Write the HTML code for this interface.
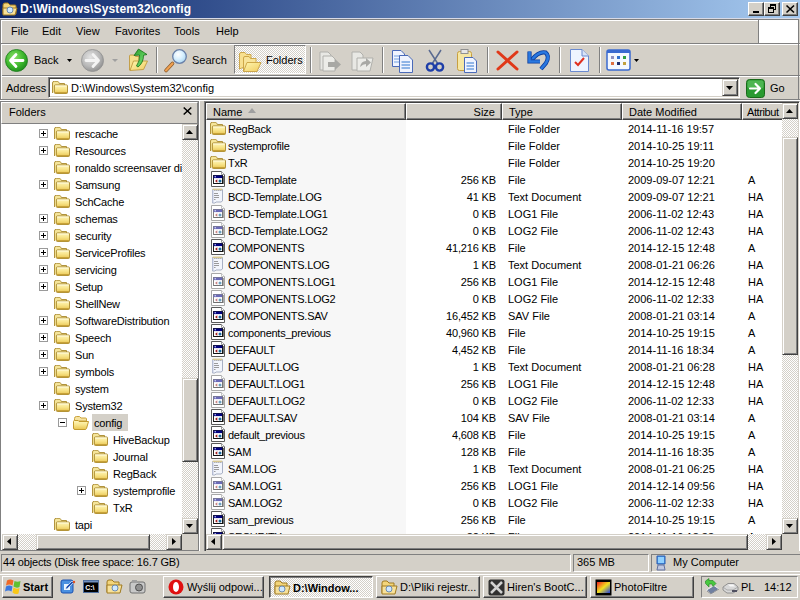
<!DOCTYPE html><html><head><meta charset="utf-8"><title>D:\Windows\System32\config</title><style>
*{box-sizing:border-box}
html,body{margin:0;padding:0}
body{width:800px;height:600px;overflow:hidden;position:relative;background:#d4d0c8;font-family:"Liberation Sans",sans-serif;font-size:11px;color:#000}
.abs{position:absolute}
.t{position:absolute;white-space:nowrap;line-height:13px;height:13px}
.raised{background:#d4d0c8;border-top:1px solid #fff;border-left:1px solid #fff;border-right:1px solid #404040;border-bottom:1px solid #404040;box-shadow:inset -1px -1px 0 #808080}
.raised2{background:#d4d0c8;border-top:1px solid #d4d0c8;border-left:1px solid #d4d0c8;border-right:1px solid #404040;border-bottom:1px solid #404040;box-shadow:inset 1px 1px 0 #fff, inset -1px -1px 0 #808080}
.sunk{border-top:1px solid #808080;border-left:1px solid #808080;border-right:1px solid #fff;border-bottom:1px solid #fff;box-shadow:inset 1px 1px 0 #404040, inset -1px -1px 0 #d4d0c8}
.thin{border-top:1px solid #808080;border-left:1px solid #808080;border-right:1px solid #fff;border-bottom:1px solid #fff}
.dither{background-color:#fff;background-image:linear-gradient(45deg,#d4d0c8 25%,transparent 25%,transparent 75%,#d4d0c8 75%),linear-gradient(45deg,#d4d0c8 25%,transparent 25%,transparent 75%,#d4d0c8 75%);background-size:2px 2px;background-position:0 0,1px 1px}
.hl{position:absolute;height:1px}
.vl{position:absolute;width:1px}
svg{position:absolute;overflow:visible}
</style></head><body>
<svg width="0" height="0" style="position:absolute">
<defs>
<linearGradient id="fy" x1="0" y1="0" x2="0" y2="1"><stop offset="0" stop-color="#fff8c0"/><stop offset="0.5" stop-color="#f8e48a"/><stop offset="1" stop-color="#e8c450"/></linearGradient>
<radialGradient id="gback" cx="0.4" cy="0.35" r="0.7"><stop offset="0" stop-color="#8ee06a"/><stop offset="0.6" stop-color="#3cb72c"/><stop offset="1" stop-color="#1c8a1c"/></radialGradient>
<radialGradient id="gfwd" cx="0.4" cy="0.35" r="0.7"><stop offset="0" stop-color="#e4e4e4"/><stop offset="0.6" stop-color="#b8b8b8"/><stop offset="1" stop-color="#8c8c8c"/></radialGradient>
<symbol id="fold" viewBox="0 0 16 13"><path d="M0.5 12 V2 Q0.5 0.3 2.3 0.3 H5.3 Q6.2 0.3 6.7 1.2 L7.3 2.5 H12.5 V5" fill="#f5e59a" stroke="#a8882c" stroke-width="0.9"/><rect x="2.4" y="3.9" width="13.1" height="8.6" rx="1" fill="url(#fy)" stroke="#a8882c" stroke-width="0.9"/><path d="M3 11.6 H15" stroke="#c8a238" stroke-width="1.2"/><path d="M3.2 5 H14.6" stroke="#fffce8" stroke-width="0.8"/></symbol>
<symbol id="fopen" viewBox="0 0 16 14"><path d="M1.5 2.5 Q1.5 0.5 3.5 0.5 H6.5 L8 2 H12.5 Q13.5 2 13.5 3 V5 H1.5Z" fill="#f6e3a0" stroke="#c9a23c"/><path d="M0.5 5.5 Q0.5 4.5 1.5 4.5 H5 L6 5.5 H15.5 L13.5 12.5 Q13 13.5 12 13.5 H2 Q0.5 13.5 0.5 12Z" fill="url(#fy)" stroke="#c29a2e"/></symbol>
<symbol id="reg" viewBox="0 0 16 16"><path d="M1.5 0.5 H11.5 L14.5 3.5 V15.5 H1.5Z" fill="#fff" stroke="#5a5a5a"/><path d="M11.5 0.5 V3.5 H14.5" fill="#fff" stroke="#9a9a9a"/><rect x="3.5" y="4.5" width="9" height="8" fill="#fff" stroke="#202020"/><rect x="3.5" y="4.5" width="9" height="2.6" fill="#000080"/><circle cx="5.2" cy="5.8" r="0.7" fill="#d8d8ff"/><path d="M7.3 8.3 L5 10 L7.3 11.7Z" fill="#a01818"/><circle cx="10" cy="10" r="1.5" fill="#1a6aa0"/><path d="M4 12.5 H13 V5" fill="none" stroke="#101010" stroke-width="1.2"/></symbol>
<symbol id="regl" viewBox="0 0 16 16"><path d="M1.5 0.5 H11.5 L14.5 3.5 V15.5 H1.5Z" fill="#fff" stroke="#a8a8a8"/><path d="M11.5 0.5 V3.5 H14.5" fill="#fff" stroke="#c0c0c0"/><rect x="3.5" y="4.5" width="9" height="8" fill="#fff" stroke="#808080"/><rect x="3.5" y="4.5" width="9" height="2.6" fill="#6a6ab8"/><circle cx="5.2" cy="5.8" r="0.7" fill="#e8e8ff"/><path d="M7.3 8.3 L5 10 L7.3 11.7Z" fill="#c88080"/><circle cx="10" cy="10" r="1.5" fill="#6aa0c0"/><path d="M4 12.5 H13 V5" fill="none" stroke="#707070" stroke-width="1.2"/></symbol>
<symbol id="txt" viewBox="0 0 16 16"><path d="M2.5 1.5 H12.5 V13 L11 14 H6 L5 15 H2.5Z" fill="#f2f5fc" stroke="#a8b0c4"/><path d="M2.8 1.3 H12.2" stroke="#d8c890" stroke-width="1.4"/><path d="M4.5 2.5 h0.8 M6.5 2.5 h0.8 M8.5 2.5 h0.8 M10.5 2.5 h0.8" stroke="#707070"/><path d="M4 5.5 H8 M4 7.5 H9 M4 9.5 H9 M4 11.5 H5.5" stroke="#909090" stroke-width="0.9"/><path d="M3 2 V14.5" stroke="#c0c8e0"/></symbol>
</defs></svg>
<div class="abs" style="left:0;top:0;width:800px;height:18px;background:linear-gradient(to right,#0a246a,#a6caf0)"></div>
<svg style="left:2px;top:1px" width="16" height="16" viewBox="0 0 16 16"><path d="M1 4 Q1 2 3 2 H6 L8 4 H13 Q14 4 14 5 V13 H1Z" fill="#f3d57a" stroke="#a07a20"/><path d="M1 7 H15 L13 14 H1Z" fill="#f7e19a" stroke="#a07a20"/><circle cx="8" cy="9" r="3" fill="#cfe8ff" stroke="#6a8ab0"/></svg>
<div class="t" style="left:20px;top:2px;color:#fff;font-weight:bold;font-size:12px;line-height:14px;height:14px;letter-spacing:0.15px">D:\Windows\System32\config</div>
<div class="abs raised" style="left:748px;top:2px;width:16px;height:14px"><div class="abs" style="left:4px;top:8px;width:6px;height:2px;background:#000"></div></div>
<div class="abs raised" style="left:764px;top:2px;width:16px;height:14px"><div class="abs" style="left:5px;top:1px;width:6px;height:6px;border:1px solid #000;border-top-width:2px"></div><div class="abs" style="left:3px;top:4px;width:6px;height:6px;border:1px solid #000;border-top-width:2px;background:#d4d0c8"></div></div>
<div class="abs raised" style="left:782px;top:2px;width:16px;height:14px"><svg style="left:3px;top:2px" width="9" height="8" viewBox="0 0 9 8"><path d="M0.5 0.5 L8 7.5 M8 0.5 L0.5 7.5" stroke="#000" stroke-width="1.6"/></svg></div>
<div class="hl" style="left:0;top:18px;width:800px;background:#d8dae6"></div>
<div class="hl" style="left:0;top:19px;width:799px;background:#808080"></div>
<div class="hl" style="left:1px;top:20px;width:757px;background:#fff"></div>
<div class="vl" style="left:0;top:19px;height:26px;background:#808080"></div>
<div class="vl" style="left:1px;top:20px;height:24px;background:#fff"></div>
<div class="hl" style="left:0;top:43px;width:800px;background:#808080"></div>
<div class="hl" style="left:1px;top:44px;width:799px;background:#fff"></div>
<div class="abs" style="left:759px;top:20px;width:39px;height:23px;background:#fff"></div>
<div class="vl" style="left:758px;top:19px;height:24px;background:#808080"></div>
<div class="t" style="left:11px;top:25px">File</div>
<div class="t" style="left:42px;top:25px">Edit</div>
<div class="t" style="left:76px;top:25px">View</div>
<div class="t" style="left:115px;top:25px">Favorites</div>
<div class="t" style="left:174px;top:25px">Tools</div>
<div class="t" style="left:216px;top:25px">Help</div>
<div class="hl" style="left:0;top:75px;width:800px;background:#808080"></div>
<div class="hl" style="left:1px;top:76px;width:799px;background:#fff"></div>
<div class="vl" style="left:0;top:43px;height:34px;background:#808080"></div>
<div class="vl" style="left:1px;top:44px;height:32px;background:#fff"></div>
<svg style="left:5px;top:49px" width="23" height="23" viewBox="0 0 23 23"><circle cx="11.5" cy="11.5" r="11" fill="url(#gback)" stroke="#1a7a1a" stroke-width="0.8"/><path d="M11 5.5 L5.5 11.5 L11 17.5 M6 11.5 H18" fill="none" stroke="#fff" stroke-width="2.8" stroke-linecap="round" stroke-linejoin="round"/></svg>
<div class="t" style="left:34px;top:54px">Back</div>
<svg style="left:67px;top:59px" width="5" height="3" viewBox="0 0 5 3"><path d="M0 0H5L2.5 3Z" fill="#000"/></svg>
<svg style="left:81px;top:49px" width="23" height="23" viewBox="0 0 23 23"><circle cx="11.5" cy="11.5" r="11" fill="url(#gfwd)" stroke="#909090" stroke-width="0.8"/><path d="M12 5.5 L17.5 11.5 L12 17.5 M17 11.5 H5" fill="none" stroke="#f4f4f4" stroke-width="2.8" stroke-linecap="round" stroke-linejoin="round"/></svg>
<svg style="left:112px;top:59px" width="6" height="3" viewBox="0 0 6 3"><path d="M0 0H6L3 3Z" fill="#a0a0a0"/></svg>
<svg style="left:124px;top:46px" width="28" height="28" viewBox="0 0 28 28"><defs><linearGradient id="gup" x1="0" y1="0" x2="1" y2="1"><stop offset="0" stop-color="#fff6b0"/><stop offset="1" stop-color="#f0cc60"/></linearGradient><linearGradient id="garr" x1="0" y1="0" x2="1" y2="1"><stop offset="0" stop-color="#2a9a2a"/><stop offset="0.6" stop-color="#60d060"/><stop offset="1" stop-color="#1a801a"/></linearGradient></defs><path d="M5.5 24 V10 Q5.5 9 6.5 9 H10 L11.5 10.5 H15 V20Z" fill="#f6e08c" stroke="#c09a40" stroke-width="0.9"/><path d="M6 24.5 L9.5 15 H23.5 L19.5 23.5 Z" fill="url(#gup)" stroke="#c09a40" stroke-width="0.9"/><path d="M10 9.5 L14.5 3 L23 8.5 L19.5 9.2 Q19.5 17 14 21 L12.5 20 Q16 15 15.5 9Z" fill="url(#garr)" stroke="#157015" stroke-width="0.8" stroke-linejoin="round"/></svg>
<div class="vl" style="left:156px;top:47px;height:26px;background:#808080"></div><div class="vl" style="left:157px;top:47px;height:26px;background:#fff"></div>
<svg style="left:163px;top:49px" width="25" height="24" viewBox="0 0 25 24"><path d="M3 21.5 L9.5 14.5" stroke="#8a5a2a" stroke-width="3.6" stroke-linecap="round"/><path d="M3 21.5 L9.5 14.5" stroke="#f0a050" stroke-width="2.2" stroke-linecap="round"/><radialGradient id="gsr" cx="0.4" cy="0.35" r="0.7"><stop offset="0" stop-color="#ffffff"/><stop offset="0.5" stop-color="#d8f0ff"/><stop offset="1" stop-color="#a8d4f0"/></radialGradient><circle cx="16.5" cy="7.5" r="6.8" fill="url(#gsr)" stroke="#6a80a8" stroke-width="1.3"/></svg>
<div class="t" style="left:192px;top:54px">Search</div>
<div class="abs dither" style="left:234px;top:45px;width:72px;height:29px;border-top:1px solid #808080;border-left:1px solid #808080;border-right:1px solid #fff;border-bottom:1px solid #fff"></div>
<svg style="left:237px;top:50px" width="25" height="24" viewBox="0 0 25 24"><path d="M2.5 19 V4 Q2.5 2.5 4 2.5 H8 L9.5 4.5 H14 V14Z" fill="#f8e090" stroke="#c8a040" stroke-width="0.9"/><path d="M6.5 21 V8 Q6.5 6.5 8 6.5 H12 L13.5 8.5 H19 V18Z" fill="#f8e49a" stroke="#c8a040" stroke-width="0.9"/><path d="M6.5 21.5 L10 12.5 H24 L20 21.5Z" fill="url(#gup)" stroke="#c8a040" stroke-width="0.9"/></svg>
<div class="t" style="left:266px;top:54px">Folders</div>
<div class="vl" style="left:310px;top:47px;height:26px;background:#808080"></div><div class="vl" style="left:311px;top:47px;height:26px;background:#fff"></div>
<svg style="left:319px;top:50px" width="23" height="22" viewBox="0 0 23 22"><path d="M1 2 H9 L12 5 V20 H1Z" fill="#e8e8e4" stroke="#b0b0ac"/><path d="M4 6 H13 L16 9 V21 H4Z" fill="#ecece8" stroke="#b0b0ac"/><path d="M9 12 H16 V9 L22 14.5 L16 20 V17 H9Z" fill="#a8a8a4"/></svg>
<svg style="left:351px;top:50px" width="23" height="22" viewBox="0 0 23 22"><path d="M1 2 H9 L12 5 V20 H1Z" fill="#e8e8e4" stroke="#b0b0ac"/><path d="M6 8 H22 L19 21 H6Z" fill="#ecece8" stroke="#b0b0ac"/><path d="M9 17 Q10 11 15 11 V8 L20 12.5 L15 17 V14 Q12 14 9 17Z" fill="#a8a8a4"/></svg>
<div class="vl" style="left:382px;top:47px;height:26px;background:#808080"></div><div class="vl" style="left:383px;top:47px;height:26px;background:#fff"></div>
<svg style="left:391px;top:49px" width="24" height="24" viewBox="0 0 24 24"><path d="M1.5 1.5 H10 L13.5 5 V17.5 H1.5Z" fill="#f0f4ff" stroke="#4a6ab8"/><path d="M3 7H11M3 10H11M3 13H11" stroke="#70a0e0"/><path d="M8.5 6.5 H17 L21.5 11 V23.5 H8.5Z" fill="#f0f4ff" stroke="#4a6ab8"/><path d="M10.5 13H19M10.5 16H19M10.5 19H19" stroke="#70a0e0" stroke-width="1.3"/></svg>
<svg style="left:426px;top:49px" width="18" height="23" viewBox="0 0 18 23"><path d="M3 1 L12 15 M15 1 L6 15" stroke="#5a6a90" stroke-width="1.5"/><circle cx="4.5" cy="18" r="3.6" fill="none" stroke="#1e3ea8" stroke-width="2.4"/><circle cx="13.5" cy="18" r="3.6" fill="none" stroke="#1e3ea8" stroke-width="2.4"/></svg>
<svg style="left:456px;top:48px" width="22" height="25" viewBox="0 0 22 25"><rect x="1.5" y="3.5" width="14" height="19" rx="2" fill="#f6e7a4" stroke="#c8a040"/><rect x="5" y="1.5" width="7" height="4" fill="#e8e8e8" stroke="#909090"/><path d="M8.5 9.5 H17 L20.5 13 V24.5 H8.5Z" fill="#f0f4ff" stroke="#4a6ab8"/><path d="M10.5 15H18M10.5 18H18M10.5 21H18" stroke="#70a0e0" stroke-width="1.3"/></svg>
<div class="vl" style="left:487px;top:47px;height:26px;background:#808080"></div><div class="vl" style="left:488px;top:47px;height:26px;background:#fff"></div>
<svg style="left:496px;top:50px" width="23" height="21" viewBox="0 0 23 21"><path d="M2 2 L21 19 M21 2 L2 19" stroke="#e03818" stroke-width="3" stroke-linecap="round"/></svg>
<svg style="left:527px;top:49px" width="24" height="24" viewBox="0 0 24 24"><path d="M5 10.5 Q12 2 18.5 3.5 Q23 7 19 14 L14 20" fill="none" stroke="#0a3a9a" stroke-width="4.2"/><path d="M5 10.5 Q12 2 18.5 3.5 Q23 7 19 14 L14 20" fill="none" stroke="#2a78e0" stroke-width="2.6"/><path d="M2.5 2.5 V12.5 H13" fill="none" stroke="#0a3a9a" stroke-width="4.2"/><path d="M2.5 2.5 V12.5 H13" fill="none" stroke="#2a78e0" stroke-width="2.6"/></svg>
<div class="vl" style="left:559px;top:47px;height:26px;background:#808080"></div><div class="vl" style="left:560px;top:47px;height:26px;background:#fff"></div>
<svg style="left:569px;top:48px" width="21" height="25" viewBox="0 0 21 25"><path d="M1.5 1.5 H13 L19.5 8 V23.5 H1.5Z" fill="#eef4ff" stroke="#6a8ad0"/><path d="M13 1.5 V8 H19.5" fill="#d8e4f8" stroke="#6a8ad0"/><path d="M6 14 L9 17 L15 10" fill="none" stroke="#e03020" stroke-width="2"/></svg>
<div class="vl" style="left:599px;top:47px;height:26px;background:#808080"></div><div class="vl" style="left:600px;top:47px;height:26px;background:#fff"></div>
<svg style="left:606px;top:49px" width="25" height="22" viewBox="0 0 25 22"><rect x="1" y="1" width="23" height="20" rx="2" fill="#f4f8ff" stroke="#3a6ad0" stroke-width="1.5"/><rect x="1" y="1" width="23" height="3" fill="#3a6ad0"/><rect x="5" y="7" width="3" height="3" fill="#9090c0"/><rect x="11" y="7" width="3" height="3" fill="#3070d0"/><rect x="17" y="7" width="3" height="3" fill="#30a040"/><rect x="5" y="13" width="3" height="3" fill="#e07040"/><rect x="11" y="13" width="3" height="3" fill="#203070"/><rect x="17" y="13" width="3" height="3" fill="#c0a040"/></svg>
<svg style="left:634px;top:59px" width="5" height="3" viewBox="0 0 5 3"><path d="M0 0H5L2.5 3Z" fill="#000"/></svg>
<div class="hl" style="left:0;top:99px;width:800px;background:#808080"></div>
<div class="vl" style="left:0;top:76px;height:24px;background:#808080"></div>
<div class="vl" style="left:1px;top:77px;height:22px;background:#fff"></div>
<div class="t" style="left:6px;top:82px">Address</div>
<div class="abs sunk" style="left:48px;top:77px;width:692px;height:21px;background:#fff"></div>
<svg style="left:52px;top:81px" width="16" height="13"><use href="#fold" width="16" height="13"/></svg>
<div class="t" style="left:71px;top:82px">D:\Windows\System32\config</div>
<div class="abs raised2" style="left:722px;top:79px;width:16px;height:17px"></div>
<svg style="left:726px;top:86px" width="7" height="4" viewBox="0 0 7 4"><path d="M0 0H7L3.5 4Z" fill="#000"/></svg>
<svg style="left:746px;top:79px" width="19" height="19" viewBox="0 0 19 19"><rect x="0.5" y="0.5" width="18" height="18" rx="3" fill="#2a9a30" stroke="#1a6a1a"/><rect x="1.5" y="1.5" width="16" height="8" rx="2" fill="#5cc060" opacity="0.7"/><path d="M4 9.5 H14 M9.5 5 L14 9.5 L9.5 14" fill="none" stroke="#fff" stroke-width="2.2" stroke-linecap="round" stroke-linejoin="round"/></svg>
<div class="t" style="left:770px;top:82px">Go</div>
<div class="vl" style="left:798px;top:19px;height:81px;background:#808080"></div>
<div class="hl" style="left:0;top:100px;width:800px;background:#fff"></div>
<div class="hl" style="left:0;top:101px;width:199px;background:#808080"></div>
<div class="vl" style="left:0;top:101px;height:450px;background:#808080"></div>
<div class="vl" style="left:198px;top:101px;height:450px;background:#808080"></div>
<div class="vl" style="left:199px;top:101px;height:451px;background:#fff"></div>
<div class="hl" style="left:0;top:550px;width:199px;background:#808080"></div>
<div class="hl" style="left:0;top:551px;width:800px;background:#fff"></div>
<div class="abs" style="left:1px;top:102px;width:197px;height:22px;background:#d4d0c8;border-top:1px solid #fff;border-left:1px solid #fff;border-bottom:1px solid #808080;border-right:1px solid #808080"></div>
<div class="t" style="left:9px;top:106px">Folders</div>
<svg style="left:183px;top:107px" width="9" height="8" viewBox="0 0 9 8"><path d="M0.7 0.5 L8.3 7.5 M8.3 0.5 L0.7 7.5" stroke="#000" stroke-width="1.5"/></svg>
<div class="abs" style="left:1px;top:124px;width:197px;height:426px;background:#fff;overflow:hidden">
<div class="abs" style="left:38px;top:5px;width:9px;height:9px;border:1px solid #9a9a9a;background:#fff"><div class="abs" style="left:1px;top:3px;width:5px;height:1px;background:#000"></div><div class="abs" style="left:3px;top:1px;width:1px;height:5px;background:#000"></div></div>
<svg style="left:53px;top:3px" width="16" height="13"><use href="#fold" width="16" height="13"/></svg>
<div class="t" style="left:74px;top:4px;letter-spacing:-0.2px">rescache</div>
<div class="abs" style="left:38px;top:22px;width:9px;height:9px;border:1px solid #9a9a9a;background:#fff"><div class="abs" style="left:1px;top:3px;width:5px;height:1px;background:#000"></div><div class="abs" style="left:3px;top:1px;width:1px;height:5px;background:#000"></div></div>
<svg style="left:53px;top:20px" width="16" height="13"><use href="#fold" width="16" height="13"/></svg>
<div class="t" style="left:74px;top:21px;letter-spacing:-0.2px">Resources</div>
<svg style="left:53px;top:37px" width="16" height="13"><use href="#fold" width="16" height="13"/></svg>
<div class="t" style="left:74px;top:38px;letter-spacing:-0.2px">ronaldo screensaver di</div>
<div class="abs" style="left:38px;top:56px;width:9px;height:9px;border:1px solid #9a9a9a;background:#fff"><div class="abs" style="left:1px;top:3px;width:5px;height:1px;background:#000"></div><div class="abs" style="left:3px;top:1px;width:1px;height:5px;background:#000"></div></div>
<svg style="left:53px;top:54px" width="16" height="13"><use href="#fold" width="16" height="13"/></svg>
<div class="t" style="left:74px;top:55px;letter-spacing:-0.2px">Samsung</div>
<svg style="left:53px;top:71px" width="16" height="13"><use href="#fold" width="16" height="13"/></svg>
<div class="t" style="left:74px;top:72px;letter-spacing:-0.2px">SchCache</div>
<div class="abs" style="left:38px;top:90px;width:9px;height:9px;border:1px solid #9a9a9a;background:#fff"><div class="abs" style="left:1px;top:3px;width:5px;height:1px;background:#000"></div><div class="abs" style="left:3px;top:1px;width:1px;height:5px;background:#000"></div></div>
<svg style="left:53px;top:88px" width="16" height="13"><use href="#fold" width="16" height="13"/></svg>
<div class="t" style="left:74px;top:89px;letter-spacing:-0.2px">schemas</div>
<div class="abs" style="left:38px;top:107px;width:9px;height:9px;border:1px solid #9a9a9a;background:#fff"><div class="abs" style="left:1px;top:3px;width:5px;height:1px;background:#000"></div><div class="abs" style="left:3px;top:1px;width:1px;height:5px;background:#000"></div></div>
<svg style="left:53px;top:105px" width="16" height="13"><use href="#fold" width="16" height="13"/></svg>
<div class="t" style="left:74px;top:106px;letter-spacing:-0.2px">security</div>
<div class="abs" style="left:38px;top:124px;width:9px;height:9px;border:1px solid #9a9a9a;background:#fff"><div class="abs" style="left:1px;top:3px;width:5px;height:1px;background:#000"></div><div class="abs" style="left:3px;top:1px;width:1px;height:5px;background:#000"></div></div>
<svg style="left:53px;top:122px" width="16" height="13"><use href="#fold" width="16" height="13"/></svg>
<div class="t" style="left:74px;top:123px;letter-spacing:-0.2px">ServiceProfiles</div>
<div class="abs" style="left:38px;top:141px;width:9px;height:9px;border:1px solid #9a9a9a;background:#fff"><div class="abs" style="left:1px;top:3px;width:5px;height:1px;background:#000"></div><div class="abs" style="left:3px;top:1px;width:1px;height:5px;background:#000"></div></div>
<svg style="left:53px;top:139px" width="16" height="13"><use href="#fold" width="16" height="13"/></svg>
<div class="t" style="left:74px;top:140px;letter-spacing:-0.2px">servicing</div>
<div class="abs" style="left:38px;top:158px;width:9px;height:9px;border:1px solid #9a9a9a;background:#fff"><div class="abs" style="left:1px;top:3px;width:5px;height:1px;background:#000"></div><div class="abs" style="left:3px;top:1px;width:1px;height:5px;background:#000"></div></div>
<svg style="left:53px;top:156px" width="16" height="13"><use href="#fold" width="16" height="13"/></svg>
<div class="t" style="left:74px;top:157px;letter-spacing:-0.2px">Setup</div>
<svg style="left:53px;top:173px" width="16" height="13"><use href="#fold" width="16" height="13"/></svg>
<div class="t" style="left:74px;top:174px;letter-spacing:-0.2px">ShellNew</div>
<div class="abs" style="left:38px;top:192px;width:9px;height:9px;border:1px solid #9a9a9a;background:#fff"><div class="abs" style="left:1px;top:3px;width:5px;height:1px;background:#000"></div><div class="abs" style="left:3px;top:1px;width:1px;height:5px;background:#000"></div></div>
<svg style="left:53px;top:190px" width="16" height="13"><use href="#fold" width="16" height="13"/></svg>
<div class="t" style="left:74px;top:191px;letter-spacing:-0.2px">SoftwareDistribution</div>
<div class="abs" style="left:38px;top:209px;width:9px;height:9px;border:1px solid #9a9a9a;background:#fff"><div class="abs" style="left:1px;top:3px;width:5px;height:1px;background:#000"></div><div class="abs" style="left:3px;top:1px;width:1px;height:5px;background:#000"></div></div>
<svg style="left:53px;top:207px" width="16" height="13"><use href="#fold" width="16" height="13"/></svg>
<div class="t" style="left:74px;top:208px;letter-spacing:-0.2px">Speech</div>
<div class="abs" style="left:38px;top:226px;width:9px;height:9px;border:1px solid #9a9a9a;background:#fff"><div class="abs" style="left:1px;top:3px;width:5px;height:1px;background:#000"></div><div class="abs" style="left:3px;top:1px;width:1px;height:5px;background:#000"></div></div>
<svg style="left:53px;top:224px" width="16" height="13"><use href="#fold" width="16" height="13"/></svg>
<div class="t" style="left:74px;top:225px;letter-spacing:-0.2px">Sun</div>
<div class="abs" style="left:38px;top:243px;width:9px;height:9px;border:1px solid #9a9a9a;background:#fff"><div class="abs" style="left:1px;top:3px;width:5px;height:1px;background:#000"></div><div class="abs" style="left:3px;top:1px;width:1px;height:5px;background:#000"></div></div>
<svg style="left:53px;top:241px" width="16" height="13"><use href="#fold" width="16" height="13"/></svg>
<div class="t" style="left:74px;top:242px;letter-spacing:-0.2px">symbols</div>
<svg style="left:53px;top:258px" width="16" height="13"><use href="#fold" width="16" height="13"/></svg>
<div class="t" style="left:74px;top:259px;letter-spacing:-0.2px">system</div>
<div class="abs" style="left:38px;top:277px;width:9px;height:9px;border:1px solid #9a9a9a;background:#fff"><div class="abs" style="left:1px;top:3px;width:5px;height:1px;background:#000"></div><div class="abs" style="left:3px;top:1px;width:1px;height:5px;background:#000"></div></div>
<svg style="left:53px;top:275px" width="16" height="13"><use href="#fold" width="16" height="13"/></svg>
<div class="t" style="left:74px;top:276px;letter-spacing:-0.2px">System32</div>
<div class="abs" style="left:57px;top:294px;width:9px;height:9px;border:1px solid #9a9a9a;background:#fff"><div class="abs" style="left:1px;top:3px;width:5px;height:1px;background:#000"></div></div>
<div class="abs" style="left:91px;top:290px;width:36px;height:17px;background:#d4d0c8"></div>
<svg style="left:72px;top:292px" width="16" height="14"><use href="#fopen" width="16" height="14"/></svg>
<div class="t" style="left:93px;top:293px;letter-spacing:-0.2px">config</div>
<svg style="left:91px;top:309px" width="16" height="13"><use href="#fold" width="16" height="13"/></svg>
<div class="t" style="left:112px;top:310px;letter-spacing:-0.2px">HiveBackup</div>
<svg style="left:91px;top:326px" width="16" height="13"><use href="#fold" width="16" height="13"/></svg>
<div class="t" style="left:112px;top:327px;letter-spacing:-0.2px">Journal</div>
<svg style="left:91px;top:343px" width="16" height="13"><use href="#fold" width="16" height="13"/></svg>
<div class="t" style="left:112px;top:344px;letter-spacing:-0.2px">RegBack</div>
<div class="abs" style="left:76px;top:362px;width:9px;height:9px;border:1px solid #9a9a9a;background:#fff"><div class="abs" style="left:1px;top:3px;width:5px;height:1px;background:#000"></div><div class="abs" style="left:3px;top:1px;width:1px;height:5px;background:#000"></div></div>
<svg style="left:91px;top:360px" width="16" height="13"><use href="#fold" width="16" height="13"/></svg>
<div class="t" style="left:112px;top:361px;letter-spacing:-0.2px">systemprofile</div>
<svg style="left:91px;top:377px" width="16" height="13"><use href="#fold" width="16" height="13"/></svg>
<div class="t" style="left:112px;top:378px;letter-spacing:-0.2px">TxR</div>
<svg style="left:53px;top:394px" width="16" height="13"><use href="#fold" width="16" height="13"/></svg>
<div class="t" style="left:74px;top:395px;letter-spacing:-0.2px">tapi</div>
</div>
<div class="abs dither" style="left:182px;top:124px;width:16px;height:410px"></div>
<div class="abs raised2" style="left:182px;top:124px;width:16px;height:16px"></div>
<svg style="left:186px;top:130px" width="7" height="4" viewBox="0 0 7 4"><path d="M3.5 0L7 4H0Z" fill="#000"/></svg>
<div class="abs raised2" style="left:182px;top:378px;width:16px;height:84px"></div>
<div class="abs raised2" style="left:182px;top:518px;width:16px;height:16px"></div>
<svg style="left:186px;top:524px" width="7" height="4" viewBox="0 0 7 4"><path d="M0 0H7L3.5 4Z" fill="#000"/></svg>
<div class="abs dither" style="left:2px;top:534px;width:180px;height:16px"></div>
<div class="abs raised2" style="left:2px;top:534px;width:16px;height:16px"></div>
<svg style="left:7px;top:538px" width="4" height="7" viewBox="0 0 4 7"><path d="M4 0V7L0 3.5Z" fill="#000"/></svg>
<div class="abs raised2" style="left:36px;top:534px;width:114px;height:16px"></div>
<div class="abs raised2" style="left:166px;top:534px;width:16px;height:16px"></div>
<svg style="left:172px;top:538px" width="4" height="7" viewBox="0 0 4 7"><path d="M0 0V7L4 3.5Z" fill="#000"/></svg>
<div class="abs" style="left:182px;top:534px;width:16px;height:16px;background:#d4d0c8"></div>
<div class="abs" style="left:204px;top:101px;width:596px;height:451px;border-top:1px solid #808080;border-left:1px solid #808080;border-right:1px solid #fff;border-bottom:1px solid #fff;box-shadow:inset 1px 1px 0 #404040"></div>
<div class="abs" style="left:206px;top:119px;width:576px;height:415px;background:#fff;overflow:hidden">
<div class="abs" style="left:0;top:0;width:200px;height:415px;background:#f7f7f7"></div>
<svg style="left:4px;top:3px" width="16" height="13"><use href="#fold" width="16" height="13"/></svg>
<div class="t" style="left:22px;top:4px;letter-spacing:-0.25px">RegBack</div>
<div class="t" style="left:302px;top:4px">File Folder</div>
<div class="t" style="left:422px;top:4px">2014-11-16 19:57</div>
<svg style="left:4px;top:20px" width="16" height="13"><use href="#fold" width="16" height="13"/></svg>
<div class="t" style="left:22px;top:21px;letter-spacing:-0.25px">systemprofile</div>
<div class="t" style="left:302px;top:21px">File Folder</div>
<div class="t" style="left:422px;top:21px">2014-10-25 19:11</div>
<svg style="left:4px;top:37px" width="16" height="13"><use href="#fold" width="16" height="13"/></svg>
<div class="t" style="left:22px;top:38px;letter-spacing:-0.25px">TxR</div>
<div class="t" style="left:302px;top:38px">File Folder</div>
<div class="t" style="left:422px;top:38px">2014-10-25 19:20</div>
<svg style="left:4px;top:52px" width="16" height="16"><use href="#reg" width="16" height="16"/></svg>
<div class="t" style="left:22px;top:55px;letter-spacing:-0.25px">BCD-Template</div>
<div class="t" style="left:200px;width:90px;text-align:right;top:55px;letter-spacing:-0.15px">256 KB</div>
<div class="t" style="left:302px;top:55px">File</div>
<div class="t" style="left:422px;top:55px">2009-09-07 12:21</div>
<div class="t" style="left:542px;top:55px">A</div>
<svg style="left:4px;top:69px" width="16" height="16"><use href="#txt" width="16" height="16"/></svg>
<div class="t" style="left:22px;top:72px;letter-spacing:-0.25px">BCD-Template.LOG</div>
<div class="t" style="left:200px;width:90px;text-align:right;top:72px;letter-spacing:-0.15px">41 KB</div>
<div class="t" style="left:302px;top:72px">Text Document</div>
<div class="t" style="left:422px;top:72px">2009-09-07 12:21</div>
<div class="t" style="left:542px;top:72px">HA</div>
<svg style="left:4px;top:86px" width="16" height="16"><use href="#regl" width="16" height="16"/></svg>
<div class="t" style="left:22px;top:89px;letter-spacing:-0.25px">BCD-Template.LOG1</div>
<div class="t" style="left:200px;width:90px;text-align:right;top:89px;letter-spacing:-0.15px">0 KB</div>
<div class="t" style="left:302px;top:89px">LOG1 File</div>
<div class="t" style="left:422px;top:89px">2006-11-02 12:43</div>
<div class="t" style="left:542px;top:89px">HA</div>
<svg style="left:4px;top:103px" width="16" height="16"><use href="#regl" width="16" height="16"/></svg>
<div class="t" style="left:22px;top:106px;letter-spacing:-0.25px">BCD-Template.LOG2</div>
<div class="t" style="left:200px;width:90px;text-align:right;top:106px;letter-spacing:-0.15px">0 KB</div>
<div class="t" style="left:302px;top:106px">LOG2 File</div>
<div class="t" style="left:422px;top:106px">2006-11-02 12:43</div>
<div class="t" style="left:542px;top:106px">HA</div>
<svg style="left:4px;top:120px" width="16" height="16"><use href="#reg" width="16" height="16"/></svg>
<div class="t" style="left:22px;top:123px;letter-spacing:-0.25px">COMPONENTS</div>
<div class="t" style="left:200px;width:90px;text-align:right;top:123px;letter-spacing:-0.15px">41,216 KB</div>
<div class="t" style="left:302px;top:123px">File</div>
<div class="t" style="left:422px;top:123px">2014-12-15 12:48</div>
<div class="t" style="left:542px;top:123px">A</div>
<svg style="left:4px;top:137px" width="16" height="16"><use href="#txt" width="16" height="16"/></svg>
<div class="t" style="left:22px;top:140px;letter-spacing:-0.25px">COMPONENTS.LOG</div>
<div class="t" style="left:200px;width:90px;text-align:right;top:140px;letter-spacing:-0.15px">1 KB</div>
<div class="t" style="left:302px;top:140px">Text Document</div>
<div class="t" style="left:422px;top:140px">2008-01-21 06:26</div>
<div class="t" style="left:542px;top:140px">HA</div>
<svg style="left:4px;top:154px" width="16" height="16"><use href="#regl" width="16" height="16"/></svg>
<div class="t" style="left:22px;top:157px;letter-spacing:-0.25px">COMPONENTS.LOG1</div>
<div class="t" style="left:200px;width:90px;text-align:right;top:157px;letter-spacing:-0.15px">256 KB</div>
<div class="t" style="left:302px;top:157px">LOG1 File</div>
<div class="t" style="left:422px;top:157px">2014-12-15 12:48</div>
<div class="t" style="left:542px;top:157px">HA</div>
<svg style="left:4px;top:171px" width="16" height="16"><use href="#regl" width="16" height="16"/></svg>
<div class="t" style="left:22px;top:174px;letter-spacing:-0.25px">COMPONENTS.LOG2</div>
<div class="t" style="left:200px;width:90px;text-align:right;top:174px;letter-spacing:-0.15px">0 KB</div>
<div class="t" style="left:302px;top:174px">LOG2 File</div>
<div class="t" style="left:422px;top:174px">2006-11-02 12:33</div>
<div class="t" style="left:542px;top:174px">HA</div>
<svg style="left:4px;top:188px" width="16" height="16"><use href="#reg" width="16" height="16"/></svg>
<div class="t" style="left:22px;top:191px;letter-spacing:-0.25px">COMPONENTS.SAV</div>
<div class="t" style="left:200px;width:90px;text-align:right;top:191px;letter-spacing:-0.15px">16,452 KB</div>
<div class="t" style="left:302px;top:191px">SAV File</div>
<div class="t" style="left:422px;top:191px">2008-01-21 03:14</div>
<div class="t" style="left:542px;top:191px">A</div>
<svg style="left:4px;top:205px" width="16" height="16"><use href="#reg" width="16" height="16"/></svg>
<div class="t" style="left:22px;top:208px;letter-spacing:-0.25px">components_previous</div>
<div class="t" style="left:200px;width:90px;text-align:right;top:208px;letter-spacing:-0.15px">40,960 KB</div>
<div class="t" style="left:302px;top:208px">File</div>
<div class="t" style="left:422px;top:208px">2014-10-25 19:15</div>
<div class="t" style="left:542px;top:208px">A</div>
<svg style="left:4px;top:222px" width="16" height="16"><use href="#reg" width="16" height="16"/></svg>
<div class="t" style="left:22px;top:225px;letter-spacing:-0.25px">DEFAULT</div>
<div class="t" style="left:200px;width:90px;text-align:right;top:225px;letter-spacing:-0.15px">4,452 KB</div>
<div class="t" style="left:302px;top:225px">File</div>
<div class="t" style="left:422px;top:225px">2014-11-16 18:34</div>
<div class="t" style="left:542px;top:225px">A</div>
<svg style="left:4px;top:239px" width="16" height="16"><use href="#txt" width="16" height="16"/></svg>
<div class="t" style="left:22px;top:242px;letter-spacing:-0.25px">DEFAULT.LOG</div>
<div class="t" style="left:200px;width:90px;text-align:right;top:242px;letter-spacing:-0.15px">1 KB</div>
<div class="t" style="left:302px;top:242px">Text Document</div>
<div class="t" style="left:422px;top:242px">2008-01-21 06:28</div>
<div class="t" style="left:542px;top:242px">HA</div>
<svg style="left:4px;top:256px" width="16" height="16"><use href="#regl" width="16" height="16"/></svg>
<div class="t" style="left:22px;top:259px;letter-spacing:-0.25px">DEFAULT.LOG1</div>
<div class="t" style="left:200px;width:90px;text-align:right;top:259px;letter-spacing:-0.15px">256 KB</div>
<div class="t" style="left:302px;top:259px">LOG1 File</div>
<div class="t" style="left:422px;top:259px">2014-12-15 12:48</div>
<div class="t" style="left:542px;top:259px">HA</div>
<svg style="left:4px;top:273px" width="16" height="16"><use href="#regl" width="16" height="16"/></svg>
<div class="t" style="left:22px;top:276px;letter-spacing:-0.25px">DEFAULT.LOG2</div>
<div class="t" style="left:200px;width:90px;text-align:right;top:276px;letter-spacing:-0.15px">0 KB</div>
<div class="t" style="left:302px;top:276px">LOG2 File</div>
<div class="t" style="left:422px;top:276px">2006-11-02 12:33</div>
<div class="t" style="left:542px;top:276px">HA</div>
<svg style="left:4px;top:290px" width="16" height="16"><use href="#reg" width="16" height="16"/></svg>
<div class="t" style="left:22px;top:293px;letter-spacing:-0.25px">DEFAULT.SAV</div>
<div class="t" style="left:200px;width:90px;text-align:right;top:293px;letter-spacing:-0.15px">104 KB</div>
<div class="t" style="left:302px;top:293px">SAV File</div>
<div class="t" style="left:422px;top:293px">2008-01-21 03:14</div>
<div class="t" style="left:542px;top:293px">A</div>
<svg style="left:4px;top:307px" width="16" height="16"><use href="#reg" width="16" height="16"/></svg>
<div class="t" style="left:22px;top:310px;letter-spacing:-0.25px">default_previous</div>
<div class="t" style="left:200px;width:90px;text-align:right;top:310px;letter-spacing:-0.15px">4,608 KB</div>
<div class="t" style="left:302px;top:310px">File</div>
<div class="t" style="left:422px;top:310px">2014-10-25 19:15</div>
<div class="t" style="left:542px;top:310px">A</div>
<svg style="left:4px;top:324px" width="16" height="16"><use href="#reg" width="16" height="16"/></svg>
<div class="t" style="left:22px;top:327px;letter-spacing:-0.25px">SAM</div>
<div class="t" style="left:200px;width:90px;text-align:right;top:327px;letter-spacing:-0.15px">128 KB</div>
<div class="t" style="left:302px;top:327px">File</div>
<div class="t" style="left:422px;top:327px">2014-11-16 18:35</div>
<div class="t" style="left:542px;top:327px">A</div>
<svg style="left:4px;top:341px" width="16" height="16"><use href="#txt" width="16" height="16"/></svg>
<div class="t" style="left:22px;top:344px;letter-spacing:-0.25px">SAM.LOG</div>
<div class="t" style="left:200px;width:90px;text-align:right;top:344px;letter-spacing:-0.15px">1 KB</div>
<div class="t" style="left:302px;top:344px">Text Document</div>
<div class="t" style="left:422px;top:344px">2008-01-21 06:25</div>
<div class="t" style="left:542px;top:344px">HA</div>
<svg style="left:4px;top:358px" width="16" height="16"><use href="#regl" width="16" height="16"/></svg>
<div class="t" style="left:22px;top:361px;letter-spacing:-0.25px">SAM.LOG1</div>
<div class="t" style="left:200px;width:90px;text-align:right;top:361px;letter-spacing:-0.15px">256 KB</div>
<div class="t" style="left:302px;top:361px">LOG1 File</div>
<div class="t" style="left:422px;top:361px">2014-12-14 09:56</div>
<div class="t" style="left:542px;top:361px">HA</div>
<svg style="left:4px;top:375px" width="16" height="16"><use href="#regl" width="16" height="16"/></svg>
<div class="t" style="left:22px;top:378px;letter-spacing:-0.25px">SAM.LOG2</div>
<div class="t" style="left:200px;width:90px;text-align:right;top:378px;letter-spacing:-0.15px">0 KB</div>
<div class="t" style="left:302px;top:378px">LOG2 File</div>
<div class="t" style="left:422px;top:378px">2006-11-02 12:33</div>
<div class="t" style="left:542px;top:378px">HA</div>
<svg style="left:4px;top:392px" width="16" height="16"><use href="#reg" width="16" height="16"/></svg>
<div class="t" style="left:22px;top:395px;letter-spacing:-0.25px">sam_previous</div>
<div class="t" style="left:200px;width:90px;text-align:right;top:395px;letter-spacing:-0.15px">256 KB</div>
<div class="t" style="left:302px;top:395px">File</div>
<div class="t" style="left:422px;top:395px">2014-10-25 19:15</div>
<div class="t" style="left:542px;top:395px">A</div>
<svg style="left:4px;top:409px" width="16" height="16"><use href="#reg" width="16" height="16"/></svg>
<div class="t" style="left:22px;top:412px;letter-spacing:-0.25px">SECURITY</div>
<div class="t" style="left:200px;width:90px;text-align:right;top:412px;letter-spacing:-0.15px">32 KB</div>
<div class="t" style="left:302px;top:412px">File</div>
<div class="t" style="left:422px;top:412px">2014-11-16 18:33</div>
<div class="t" style="left:542px;top:412px">A</div>
</div>
<div class="abs" style="left:206px;top:103px;width:200px;height:17px;background:#d4d0c8;border-top:1px solid #fff;border-left:1px solid #fff;border-right:1px solid #404040;border-bottom:1px solid #404040;box-shadow:inset -1px -1px 0 #808080;overflow:visible"><div class="t" style="position:relative;top:2px;padding-left:6px">Name</div></div>
<svg style="left:248px;top:108px" width="8" height="5" viewBox="0 0 8 5"><path d="M4 0L8 5H0Z" fill="#a0a0a0"/></svg>
<div class="abs" style="left:406px;top:103px;width:96px;height:17px;background:#d4d0c8;border-top:1px solid #fff;border-left:1px solid #fff;border-right:1px solid #404040;border-bottom:1px solid #404040;box-shadow:inset -1px -1px 0 #808080;overflow:visible"><div class="t" style="position:relative;top:2px;padding-right:6px;text-align:right">Size</div></div>
<div class="abs" style="left:502px;top:103px;width:120px;height:17px;background:#d4d0c8;border-top:1px solid #fff;border-left:1px solid #fff;border-right:1px solid #404040;border-bottom:1px solid #404040;box-shadow:inset -1px -1px 0 #808080;overflow:visible"><div class="t" style="position:relative;top:2px;padding-left:6px">Type</div></div>
<div class="abs" style="left:622px;top:103px;width:120px;height:17px;background:#d4d0c8;border-top:1px solid #fff;border-left:1px solid #fff;border-right:1px solid #404040;border-bottom:1px solid #404040;box-shadow:inset -1px -1px 0 #808080;overflow:visible"><div class="t" style="position:relative;top:2px;padding-left:6px">Date Modified</div></div>
<div class="abs" style="left:742px;top:103px;width:42px;height:17px;background:#d4d0c8;border-top:1px solid #fff;border-left:1px solid #fff;border-right:1px solid #404040;border-bottom:1px solid #404040;box-shadow:inset -1px -1px 0 #808080;overflow:visible"><div class="t" style="position:relative;top:2px;padding-left:6px"><span style="letter-spacing:-0.4px;margin-left:-2px">Attribut</span></div></div>
<div class="abs dither" style="left:782px;top:103px;width:16px;height:431px"></div>
<div class="abs raised2" style="left:782px;top:103px;width:16px;height:16px"></div>
<svg style="left:786px;top:109px" width="7" height="4" viewBox="0 0 7 4"><path d="M3.5 0L7 4H0Z" fill="#000"/></svg>
<div class="abs raised2" style="left:782px;top:137px;width:16px;height:218px"></div>
<div class="abs raised2" style="left:782px;top:518px;width:16px;height:16px"></div>
<svg style="left:786px;top:524px" width="7" height="4" viewBox="0 0 7 4"><path d="M0 0H7L3.5 4Z" fill="#000"/></svg>
<div class="abs dither" style="left:206px;top:534px;width:576px;height:16px"></div>
<div class="abs raised2" style="left:206px;top:534px;width:16px;height:16px"></div>
<svg style="left:211px;top:538px" width="4" height="7" viewBox="0 0 4 7"><path d="M4 0V7L0 3.5Z" fill="#000"/></svg>
<div class="abs raised2" style="left:222px;top:534px;width:526px;height:16px"></div>
<div class="abs raised2" style="left:766px;top:534px;width:16px;height:16px"></div>
<svg style="left:772px;top:538px" width="4" height="7" viewBox="0 0 4 7"><path d="M0 0V7L4 3.5Z" fill="#000"/></svg>
<div class="abs" style="left:782px;top:534px;width:16px;height:16px;background:#d4d0c8"></div>
<div class="abs" style="left:0;top:551px;width:800px;height:23px;background:#d4d0c8"></div>
<div class="abs thin" style="left:1px;top:554px;width:570px;height:18px"></div>
<div class="abs thin" style="left:573px;top:554px;width:76px;height:18px"></div>
<div class="abs thin" style="left:651px;top:554px;width:150px;height:18px"></div>
<div class="t" style="left:3px;top:556px;letter-spacing:-0.17px">44 objects (Disk free space: 16.7 GB)</div>
<div class="t" style="left:577px;top:556px">365 MB</div>
<svg style="left:655px;top:555px" width="12" height="16" viewBox="0 0 12 16"><path d="M2 1 H10 V9 H2Z" fill="#4a9ae8" stroke="#2a5ab0"/><rect x="3" y="2" width="6" height="6" fill="#90d0ff"/><path d="M3 10 H9 L10 15 H2Z" fill="#c0c8e0" stroke="#6070a0"/></svg>
<div class="t" style="left:673px;top:556px">My Computer</div>
<div class="abs" style="left:0;top:574px;width:800px;height:26px;background:#d4d0c8;border-top:1px solid #fff"></div>
<div class="abs raised" style="left:2px;top:576px;width:51px;height:22px"></div>
<svg style="left:4px;top:578px" width="17" height="17" viewBox="0 0 17 17"><path d="M3 2.5 Q6 0.5 9.5 2.5 L8.5 7.5 Q5.5 5.5 2 7.5Z" fill="#f06a28"/><path d="M10.5 3 Q13.5 4.5 16.5 3 L15.5 9 Q12.5 10.5 9.5 8.5Z" fill="#60c030"/><path d="M2 8.5 Q5 6.5 8.5 8.5 L7.5 13.5 Q4.5 11.5 1 13.5Z" fill="#3a78e0"/><path d="M9.5 9.5 Q12.5 11.5 15.5 10 L14.5 15.5 Q11.5 17 8.5 14.5Z" fill="#f8c818"/></svg>
<div class="t" style="left:23px;top:581px;font-weight:bold">Start</div>
<svg style="left:59px;top:578px" width="17" height="17" viewBox="0 0 17 17"><path d="M2 4 Q2 2 4 2 H12 Q14 2 14 4 V13 Q14 15 12 15 H4 Q2 15 2 13Z" fill="#4a90e0" stroke="#1a50b0"/><path d="M5 6 H11 V12 H5Z" fill="#e8f4ff"/><path d="M6.5 11.5 L7 9 L13 3 L14.5 4.5 L8.5 10.5Z" fill="#2050b0" stroke="#fff" stroke-width="0.6"/><circle cx="15" cy="4" r="1.2" fill="#e05020"/></svg>
<svg style="left:83px;top:580px" width="16" height="13" viewBox="0 0 16 13"><rect x="0.5" y="0.5" width="15" height="12" fill="#000" stroke="#5070a0"/><rect x="1" y="1" width="14" height="1.5" fill="#7090c0"/><text x="2.2" y="10" font-family="Liberation Sans" font-weight="bold" font-size="7" fill="#fff">C:\</text></svg>
<svg style="left:106px;top:579px" width="17" height="15" viewBox="0 0 17 15"><path d="M1 3 Q1 1 3 1 H6 L8 3 H13 V13 H1Z" fill="#f3d57a" stroke="#a07a20"/><path d="M1 6 H16 L14 14 H1Z" fill="#f7e19a" stroke="#a07a20"/><circle cx="9" cy="9" r="3" fill="#cfe8ff" stroke="#6a8ab0"/></svg>
<svg style="left:129px;top:579px" width="17" height="15" viewBox="0 0 17 15"><rect x="1" y="3" width="15" height="11" rx="2" fill="#c8c8c8" stroke="#707070"/><circle cx="10" cy="8.5" r="3.5" fill="#909090" stroke="#505050"/><rect x="3" y="1" width="5" height="3" fill="#a0a0a0"/></svg>
<div class="abs raised" style="left:163px;top:576px;width:101px;height:22px"></div>
<svg style="left:168px;top:579px" width="16" height="16" viewBox="0 0 16 16"><circle cx="8" cy="8" r="7.5" fill="#e01010"/><ellipse cx="8" cy="8" rx="3" ry="5" fill="#fff"/></svg>
<div class="t" style="left:187px;top:581px;">Wyślij odpowi...</div>
<div class="abs dither" style="left:269px;top:576px;width:104px;height:22px;border-top:1px solid #404040;border-left:1px solid #404040;border-right:1px solid #fff;border-bottom:1px solid #fff;box-shadow:inset 1px 1px 0 #808080"></div>
<svg style="left:274px;top:580px" width="17" height="15" viewBox="0 0 17 15"><path d="M1 3 Q1 1 3 1 H6 L8 3 H13 V13 H1Z" fill="#f3d57a" stroke="#a07a20"/><path d="M1 6 H16 L14 14 H1Z" fill="#f7e19a" stroke="#a07a20"/><circle cx="8" cy="9" r="3" fill="#cfe8ff" stroke="#6a8ab0"/></svg>
<div class="t" style="left:293px;top:582px;font-weight:bold;">D:\Window...</div>
<div class="abs raised" style="left:376px;top:576px;width:104px;height:22px"></div>
<svg style="left:381px;top:580px" width="17" height="15" viewBox="0 0 17 15"><path d="M1 3 Q1 1 3 1 H6 L8 3 H13 V13 H1Z" fill="#f3d57a" stroke="#a07a20"/><path d="M1 6 H16 L14 14 H1Z" fill="#f7e19a" stroke="#a07a20"/><circle cx="8" cy="9" r="3" fill="#cfe8ff" stroke="#6a8ab0"/></svg>
<div class="t" style="left:400px;top:581px;">D:\Pliki rejestr...</div>
<div class="abs raised" style="left:483px;top:576px;width:104px;height:22px"></div>
<svg style="left:488px;top:579px" width="17" height="17" viewBox="0 0 17 17"><rect x="0.5" y="0.5" width="16" height="16" rx="2" fill="#303030"/><path d="M3 3 L14 14 M14 3 L3 14" stroke="#d0d0d0" stroke-width="2.5"/></svg>
<div class="t" style="left:507px;top:581px;">Hiren's BootC...</div>
<div class="abs raised" style="left:590px;top:576px;width:104px;height:22px"></div>
<svg style="left:595px;top:579px" width="17" height="17" viewBox="0 0 17 17"><defs><linearGradient id="pf" x1="0" y1="0" x2="1" y2="1"><stop offset="0" stop-color="#f02020"/><stop offset="0.5" stop-color="#f0e020"/><stop offset="1" stop-color="#2040e0"/></linearGradient></defs><rect x="0.5" y="0.5" width="16" height="16" fill="#000"/><rect x="2" y="3" width="13" height="11" fill="url(#pf)"/></svg>
<div class="t" style="left:614px;top:581px;">PhotoFiltre</div>
<div class="abs thin" style="left:701px;top:576px;width:97px;height:22px"></div>
<svg style="left:704px;top:578px" width="16" height="18" viewBox="0 0 16 18"><path d="M2.5 12 L10 7.5 L15 11 L7 16.5Z" fill="#7080a0" stroke="#f0f0f0" stroke-width="1"/><path d="M3 13 L7 16 L15 11" fill="none" stroke="#909090" stroke-width="1"/><path d="M1.5 3 L5 0.5 V2.5 H9 L12 5.5 L9 8.5 L8 6 H5 V9 L1.5 5.5Z" fill="#48c840" stroke="#208020" stroke-width="0.6"/></svg>
<svg style="left:722px;top:582px" width="17" height="12" viewBox="0 0 17 12"><path d="M1 5 L6 1.5 H12 L16 5 V8 L11 11 H5 L1 8Z" fill="#d8d8d8" stroke="#808080" stroke-width="0.8"/><path d="M1 5 L5 8 H11 L16 5" fill="none" stroke="#a0a0a0" stroke-width="0.8"/><path d="M6 2.5 H11 L13 4.5 H8Z" fill="#f8f8f8"/><rect x="10" y="8" width="5" height="2" fill="#505060"/></svg>
<div class="t" style="left:741px;top:581px">PL</div>
<div class="t" style="left:764px;top:581px">14:12</div>
</body></html>
